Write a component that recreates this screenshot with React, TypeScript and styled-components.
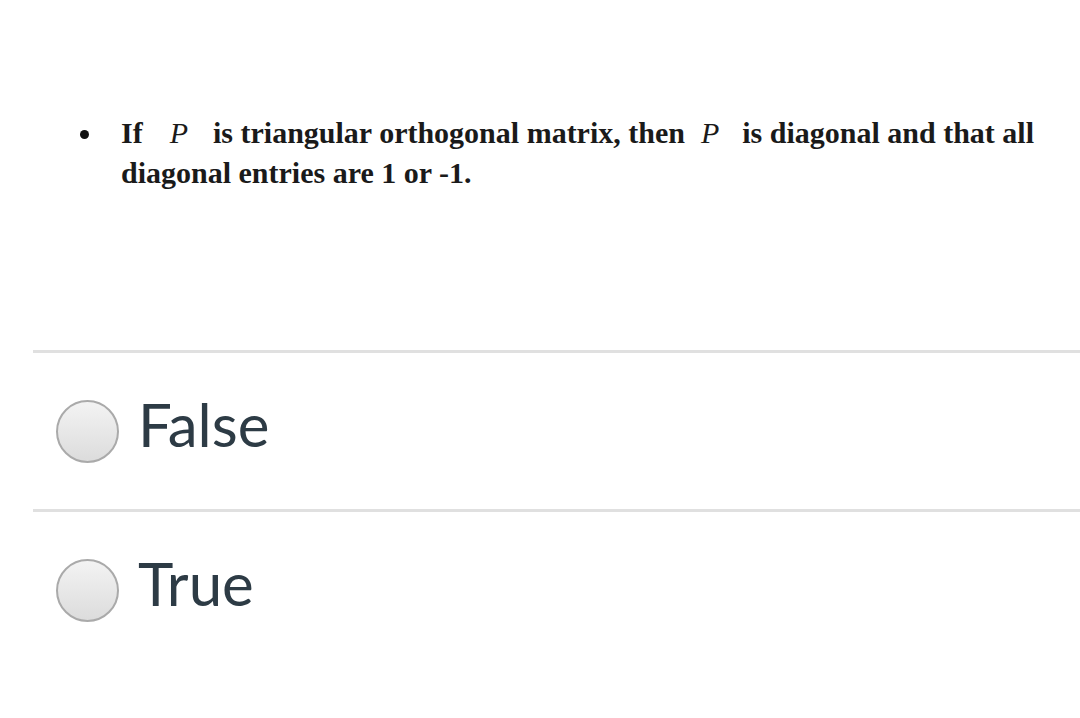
import React from 'react';
import styled, { createGlobalStyle } from 'styled-components';

const GlobalStyle = createGlobalStyle`
  html, body {
    margin: 0;
    padding: 0;
    background: #ffffff;
  }
`;

const Page = styled.div`
  width: 1080px;
  height: 718px;
  overflow: hidden;
  padding-left: 33px;
  box-sizing: border-box;
`;

const Question = styled.div`
  height: 350px;
  padding-top: 113px;
  box-sizing: border-box;
  display: flex;
  align-items: flex-start;
`;

const Bullet = styled.span`
  flex: none;
  width: 9px;
  height: 9px;
  border-radius: 50%;
  background: #111;
  margin: 17px 0 0 47px;
`;

const Statement = styled.p`
  margin: 0 0 0 32px;
  font-family: 'Liberation Serif', 'Times New Roman', serif;
  font-weight: bold;
  font-size: 30px;
  line-height: 40px;
  color: #1a1a1a;
  white-space: nowrap;
`;

const MathVar = styled.span<{ before?: number; after?: number }>`
  font-weight: normal;
  font-style: italic;
  margin: 0 ${(p) => p.after ?? 24}px 0 ${(p) => p.before ?? 24}px;
`;

const Answer = styled.label`
  display: flex;
  align-items: center;
  height: 156px;
  border-top: 3px solid #e0e0e0;
  padding-left: 23px;
  cursor: pointer;
`;

const Radio = styled.span`
  flex: none;
  width: 63px;
  height: 63px;
  border-radius: 50%;
  border: 2px solid #aaaaaa;
  background: linear-gradient(#f3f3f3, #dcdcdc);
  box-sizing: border-box;
`;

const AnswerText = styled.span`
  margin-left: 19px;
  font-family: Lato, 'Open Sans', sans-serif;
  font-size: 60px;
  color: #2d3b45;
  line-height: 1;
  position: relative;
  top: -7px;
`;

export default function App() {
  return (
    <Page>
      <GlobalStyle />
      <Question>
        <Bullet />
        <Statement>
          If<MathVar before={27} after={25}>P</MathVar>is triangular orthogonal matrix, then
          <MathVar before={16} after={23}>P</MathVar>is diagonal and that all
          <br />
          diagonal entries are 1 or -1.
        </Statement>
      </Question>
      <Answer>
        <Radio />
        <AnswerText>False</AnswerText>
      </Answer>
      <Answer>
        <Radio />
        <AnswerText>True</AnswerText>
      </Answer>
    </Page>
  );
}
